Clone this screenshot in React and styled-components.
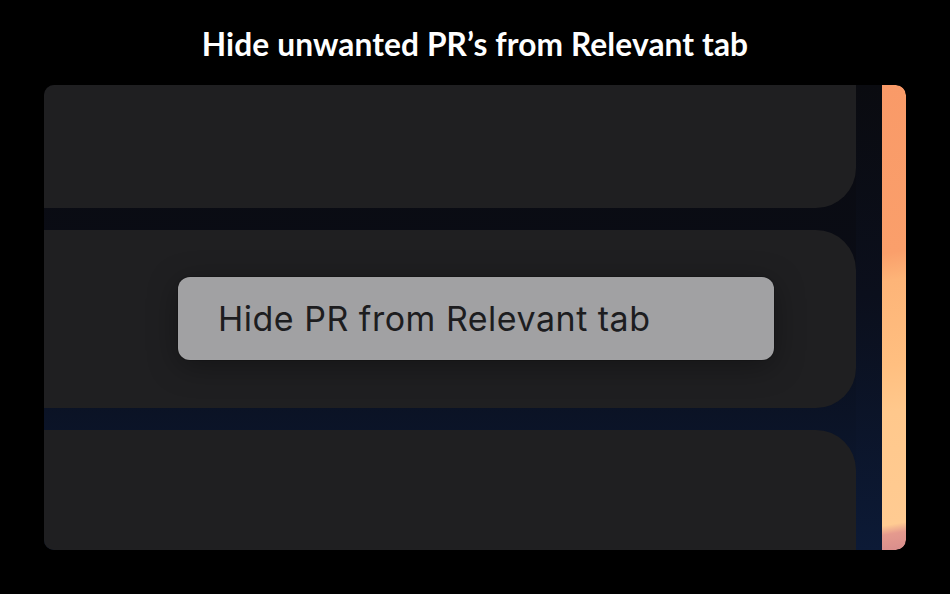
import React from 'react';
import styled, { createGlobalStyle } from 'styled-components';

const GlobalStyle = createGlobalStyle`
  html, body {
    margin: 0;
    padding: 0;
    background: #000;
  }
  body {
    font-family: Lato, "Open Sans", sans-serif;
  }
`

const Page = styled.div`
  width: 950px;
  height: 594px;
  background: #000;
  display: flex;
  flex-direction: column;
  align-items: center;
  box-sizing: border-box;
  padding-top: 24px;
`

const Title = styled.h1`
  margin: 0;
  color: #fff;
  font-family: Lato, sans-serif;
  font-weight: 700;
  font-size: 31.7px;
  line-height: 40px;
  letter-spacing: 0.1px;
`

const Window = styled.div`
  position: relative;
  margin-top: 21px;
  width: 862px;
  height: 465px;
  border-radius: 10px;
  overflow: hidden;
  display: flex;
`

const List = styled.div`
  flex: 1;
  display: flex;
  flex-direction: column;
  gap: 22px;
  background: linear-gradient(180deg, #0a0b10 0%, #0a0c15 40%, #0b1428 75%, #0c1a36 100%);
`

const Row = styled.div`
  height: ${p => p.h}px;
  flex-shrink: 0;
  background: #1f1f21;
  border-top-right-radius: ${p => (p.top ? 40 : 0)}px;
  border-bottom-right-radius: ${p => (p.bottom ? 40 : 0)}px;
`

const Sidebar = styled.div`
  width: 26px;
  background: linear-gradient(180deg, #0a0b10 0%, #0b0f1c 45%, #0c1a36 100%);
`

const Accent = styled.div`
  width: 24px;
  border-top-right-radius: 10px;
  border-bottom-right-radius: 10px;
  background: linear-gradient(170deg,
    #f99a68 0%, #fa9f6b 36%, #fdb478 42%, #ffbf80 60%, #ffc88c 70%, #ffcb92 94%, #e59a8e 96%, #d88d8c 100%);
`

const Menu = styled.div`
  position: absolute;
  left: 134px;
  top: 192px;
  width: 596px;
  height: 83px;
  box-sizing: border-box;
  border-radius: 12px;
  background: #a1a1a3;
  box-shadow: 0 6px 30px rgba(0, 0, 0, 0.35), 0 0 0 1px rgba(0, 0, 0, 0.15);
  display: flex;
  align-items: center;
  padding-left: 40px;
`

const MenuItem = styled.span`
  color: #1d1d1f;
  font-family: Inter, Lato, sans-serif;
  font-size: 34px;
  font-weight: 400;
  letter-spacing: 0.5px;
`

export default function App() {
  return (
    <Page>
      <GlobalStyle />
      <Title>Hide unwanted PR’s from Relevant tab</Title>
      <Window>
        <List>
          <Row h={123} bottom />
          <Row h={178} top bottom />
          <Row h={120} top />
        </List>
        <Sidebar />
        <Accent />
        <Menu>
          <MenuItem>Hide PR from Relevant tab</MenuItem>
        </Menu>
      </Window>
    </Page>
  );
}
